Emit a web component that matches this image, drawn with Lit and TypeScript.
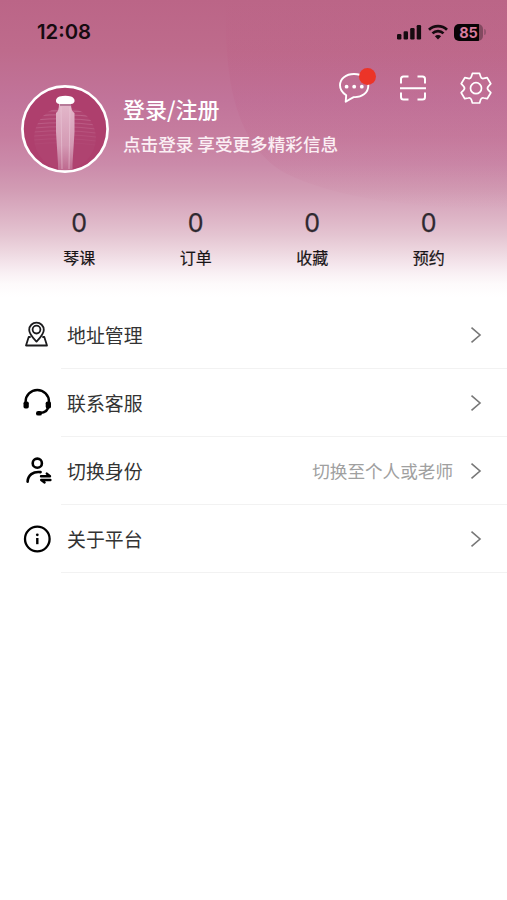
import { LitElement, html, css, svg } from "lit";
import { customElement } from "lit/decorators.js";

const icons = {
  address: svg`<g fill="none" stroke="#1c1c1e" stroke-width="1.8" stroke-linejoin="round" stroke-linecap="round">
    <path d="M14.500 21.600C11 17.800 7.200 14 7.200 9.900a7.300 7.300 0 0 1 14.600 0c0 4.100-3.800 7.900-7.300 11.700z"/>
    <circle cx="14.500" cy="9.600" r="3.900"/><path d="M8 17H6.700L4 25.500H25L22.300 17H21"/></g>`,
  service: svg`<path d="M3.600 17v-3.300a11.700 11.700 0 0 1 23.400 0V17M26.300 18c0 4.500-3.300 6.600-8.700 7" fill="none" stroke="#000" stroke-width="2.400"/>
    <rect x="1.500" y="13.500" width="5.300" height="7" rx="1.700"/><rect x="23.700" y="13.500" width="5.300" height="7" rx="1.700"/>
    <rect x="14" y="23" width="6" height="4.600" rx="2.200"/>`,
  identity: svg`<g fill="none" stroke="#000" stroke-width="2.600" stroke-linecap="round" stroke-linejoin="round">
    <circle cx="15.300" cy="7.200" r="4.600"/><path d="M5.600 25.600c.3-6.200 5.300-10.500 13-9.500"/></g>
    <path d="M19 20.200H28L24.800 17.600M28.400 24H19.200l3.400 2.400" fill="none" stroke="#000" stroke-width="2.400" stroke-linecap="round" stroke-linejoin="round"/>`,
  about: svg`<circle cx="15.300" cy="15" r="12.300" fill="none" stroke="#000" stroke-width="2.300"/>
    <circle cx="15.300" cy="10.800" r="1.400"/><path d="M15.300 14v6.200" stroke="#000" stroke-width="2.400"/>`,
};

const stats = ["琴课", "订单", "收藏", "预约"];
const menu = [
  { icon: icons.address, label: "地址管理", hint: "" },
  { icon: icons.service, label: "联系客服", hint: "" },
  { icon: icons.identity, label: "切换身份", hint: "切换至个人或老师" },
  { icon: icons.about, label: "关于平台", hint: "" },
];

@customElement("app-root")
export class AppRoot extends LitElement {
  static styles = css`
    :host {
      display: block;
      height: 900px;
      overflow: hidden;
      background: #fff;
      color: #333;
      font-family: "Noto Sans CJK SC", sans-serif;
    }
    svg { display: block; flex: none; }
    .hero {
      position: relative;
      height: 301px;
      background: linear-gradient(#bb6587 0, #be6b8c 50px, #c1749a 100px, #c67d9f 135px, #cb8baa 165px, #d29cb4 190px, #d8a9be 205px, #deb6c7 220px, #e4c4d1 235px, #ecd5de 250px, #f3e3ea 262px, #f9f0f4 273px, #fdfafb 284px, #fff 297px);
    }
    .shade { position: absolute; inset: 0; }
    .status {
      position: relative;
      display: flex;
      align-items: center;
      justify-content: space-between;
      height: 64px;
      padding: 0 21px 0 37px;
      color: #160b10;
      font: 600 20.300px/64px Inter, sans-serif;
    }
    .signals { display: flex; align-items: center; gap: 6px; }
    .battery { display: flex; align-items: center; gap: 1px; }
    .level {
      width: 29px;
      height: 17px;
      border-radius: 5px;
      background: linear-gradient(90deg, #090406 25px, #824960 25px);
      color: #d97d9f;
      font: 700 14.500px/17px Inter, sans-serif;
      text-align: center;
    }
    .nub { width: 2px; height: 6px; border-radius: 0 3px 3px 0; background: #955570; }
    .profile {
      position: relative;
      display: flex;
      align-items: flex-start;
      height: 144px;
      padding: 0 14px 0 21px;
    }
    .avatar { margin-top: 21px; }
    .account { margin: 28px 0 0 14px; color: #fff; white-space: nowrap; }
    .login { font-size: 22px; line-height: 32px; font-weight: 500; }
    .tip { margin-top: 7px; font-size: 17.600px; line-height: 26px; font-weight: 500; color: #fbeff4; }
    .actions-slot { width: 0; display: flex; justify-content: flex-end; margin-left: auto; }
    .actions { display: flex; margin-top: 3px; }
    .message { position: relative; margin-right: 23px; }
    .scan { margin-right: 31px; }
    .dot {
      position: absolute;
      top: 1px;
      right: -1px;
      width: 17px;
      height: 17px;
      border-radius: 50%;
      background: #ec3428;
    }
    .stats {
      position: relative;
      display: grid;
      grid-template-columns: repeat(4, 1fr);
      padding: 0 20px 0 21px;
      text-align: center;
    }
    .count { font: 400 25px/30px Inter, sans-serif; color: #2f2930; -webkit-text-stroke: .25px #2f2930; }
    .name { margin-top: 7px; font-size: 16px; line-height: 24px; font-weight: 400; color: #181416; -webkit-text-stroke: .2px #181416; }
    .row { display: flex; align-items: center; height: 68px; padding-left: 22px; }
    .body {
      flex: 1;
      display: flex;
      align-items: center;
      height: 67px;
      margin-left: 9px;
      padding: 0 25px 0 6px;
      border-bottom: 1px solid #f2f2f2;
      font-size: 18.900px;
    }
    .hint { margin-left: auto; margin-right: 16px; font-size: 17.600px; color: #a0a0a0; }
    .arrow { margin-left: auto; }
    .hint + .arrow { margin-left: 0; }
  `;

  render() {
    return html`
      <header class="hero">
        <svg class="shade" width="507" height="301" viewBox="0 0 507 301">
          <defs><linearGradient id="tint" x2="0" y2="1">
            <stop offset="0" stop-color="#b94b78" stop-opacity="0"/>
            <stop offset=".3" stop-color="#b94b78" stop-opacity=".11"/>
            <stop offset=".75" stop-color="#b94b78" stop-opacity=".09"/>
            <stop offset="1" stop-color="#b94b78" stop-opacity="0"/>
          </linearGradient></defs>
          <path d="M226 0C224 80 235 145 285 173C335 198 410 208 507 210V0Z" fill="url(#tint)"/>
        </svg>
        <div class="status">
          <span>12:08</span>
          <div class="signals">
            <svg width="25" height="16" viewBox="0 0 25 16" fill="#160b10">
              <rect x="0" y="10" width="4.400" height="5.500" rx="1.200"/><rect x="6.600" y="7.300" width="4.400" height="8.200" rx="1.200"/>
              <rect x="13.200" y="4" width="4.400" height="11.500" rx="1.200"/><rect x="19.700" y="1" width="4.400" height="14.500" rx="1.200"/>
            </svg>
            <svg width="20" height="16" viewBox="0 0 20 16" fill="none" stroke="#160b10" stroke-width="2.700">
              <path d="M1 5.800a12.800 12.800 0 0 1 18 0M4.500 9.400a7.800 7.800 0 0 1 11 0"/>
              <path d="M10 15.500l-3.100-3.200a4.400 4.400 0 0 1 6.200 0z" fill="#160b10" stroke="none"/>
            </svg>
            <div class="battery"><div class="level">85</div><div class="nub"></div></div>
          </div>
        </div>
        <div class="profile">
          <svg class="avatar" width="88" height="88" viewBox="0 0 88 88">
            <defs>
              <linearGradient id="body" x2="0" y2="1"><stop stop-color="#e3b7ca"/><stop offset=".6" stop-color="#d49ab4"/><stop offset="1" stop-color="#bb638a"/></linearGradient>
              <linearGradient id="fade" gradientUnits="userSpaceOnUse" x1="0" y1="25" x2="0" y2="62"><stop stop-color="#d796b5" stop-opacity=".5"/><stop offset="1" stop-color="#d796b5" stop-opacity=".02"/></linearGradient>
              <clipPath id="disc"><circle cx="44" cy="44" r="42"/></clipPath>
              <clipPath id="moon"><circle cx="44" cy="53" r="31"/></clipPath>
            </defs>
            <circle cx="44" cy="44" r="42" fill="#ae3f6d"/>
            <circle cx="44" cy="53" r="31" fill="#b44c78" opacity=".3"/>
            <path clip-path="url(#moon)" fill="none" stroke="url(#fade)" stroke-width=".9" d="M13 27q31-3 62 1M13 31q31-3 62 1M13 35q31-3 62 1M13 39q31-3 62 1M13 43q31-3 62 1M13 47q31-3 62 1M13 51q31-3 62 1M13 55q31-3 62 1M13 59q31-3 62 1"/>
            <g clip-path="url(#disc)">
              <path d="M38 19h12q0 7 3.500 9v19L51.500 79v9H37v-9L35 47V28q3-2 3-9z" fill="url(#body)"/>
              <path d="M40 22L41 84M49 22L48 84" stroke="#edcddc" stroke-width="1" opacity=".5"/>
              <path d="M39 19h11v2H39z" fill="#b77b99"/>
              <path d="M38.500 11.500q6-1.300 11.500 0c5 1.700 4.500 7.500 0 7.500H38.500c-4.500 0-5-5.800 0-7.500z" fill="#fff"/>
            </g>
            <circle cx="44" cy="44" r="42.600" fill="none" stroke="#fff" stroke-width="2.700"/>
          </svg>
          <div class="account">
            <div class="login">登录/注册</div>
            <div class="tip">点击登录 享受更多精彩信息</div>
          </div>
          <div class="actions-slot"><div class="actions">
            <div class="message">
              <svg width="38" height="40" viewBox="0 0 38 40">
                <path d="M8.700 34.800l.5-6.500C5.700 26 3 22.500 3 18.300c0-6.500 5.800-11.300 14-11.300s14.300 4.800 14.300 11.400c0 7.600-6.600 12.300-14.600 11.700q-4 2-8 4.700z" fill="none" stroke="#fff" stroke-width="1.900" stroke-linejoin="round"/>
                <g fill="#fff"><circle cx="9.600" cy="19.700" r="1.900"/><circle cx="17.200" cy="19.700" r="1.900"/><circle cx="24.800" cy="19.700" r="1.900"/></g>
              </svg>
              <span class="dot"></span>
            </div>
            <svg class="scan" width="30" height="40" viewBox="0 0 30 40" fill="none" stroke="#fff" stroke-width="2">
              <path d="M3 16.500V12q0-2.500 2.500-2.500h5M19.500 9.500h5Q27 9.500 27 12v4.500M3 25.500V30q0 2.500 2.500 2.500h5M19.500 32.500h5Q27 32.500 27 30v-4.500M2 21.300h26"/>
            </svg>
            <svg width="34" height="40" viewBox="0 0 34 40" fill="none" stroke="#fff" stroke-width="1.700" stroke-linejoin="round">
              <g transform="translate(17 21.200)">
                <path d="M-3.600-14.800H3.600L4.600-11.600Q5.300-9.200 7.750-9.800L11.200-10.500 14.800-4.500 12.350-1.900Q10.600 0 12.350 1.900L14.800 4.500 11.200 10.500 7.750 9.800Q5.300 9.200 4.600 11.600L3.600 14.800H-3.600L-4.600 11.600Q-5.300 9.200-7.750 9.800L-11.200 10.500-14.800 4.500-12.350 1.900Q-10.600 0-12.350-1.900L-14.800-4.500-11.200-10.500-7.750-9.800Q-5.300-9.200-4.600-11.600Z"/>
                <circle r="5.500"/>
              </g>
            </svg>
          </div></div>
        </div>
        <div class="stats">
          ${stats.map((s) => html`<div><div class="count">0</div><div class="name">${s}</div></div>`)}
        </div>
      </header>
      <main>
        ${menu.map((m) => html`
          <div class="row">
            <svg width="30" height="30" viewBox="0 0 30 30">${m.icon}</svg>
            <div class="body">
              <span>${m.label}</span>
              ${m.hint ? html`<span class="hint">${m.hint}</span>` : ""}
              <svg class="arrow" width="13" height="18" viewBox="0 0 13 18" fill="none" stroke="#777" stroke-width="1.600"><path d="M2.500 1.700l8.500 7.300-8.500 7.300"/></svg>
            </div>
          </div>`)}
      </main>
    `;
  }
}
